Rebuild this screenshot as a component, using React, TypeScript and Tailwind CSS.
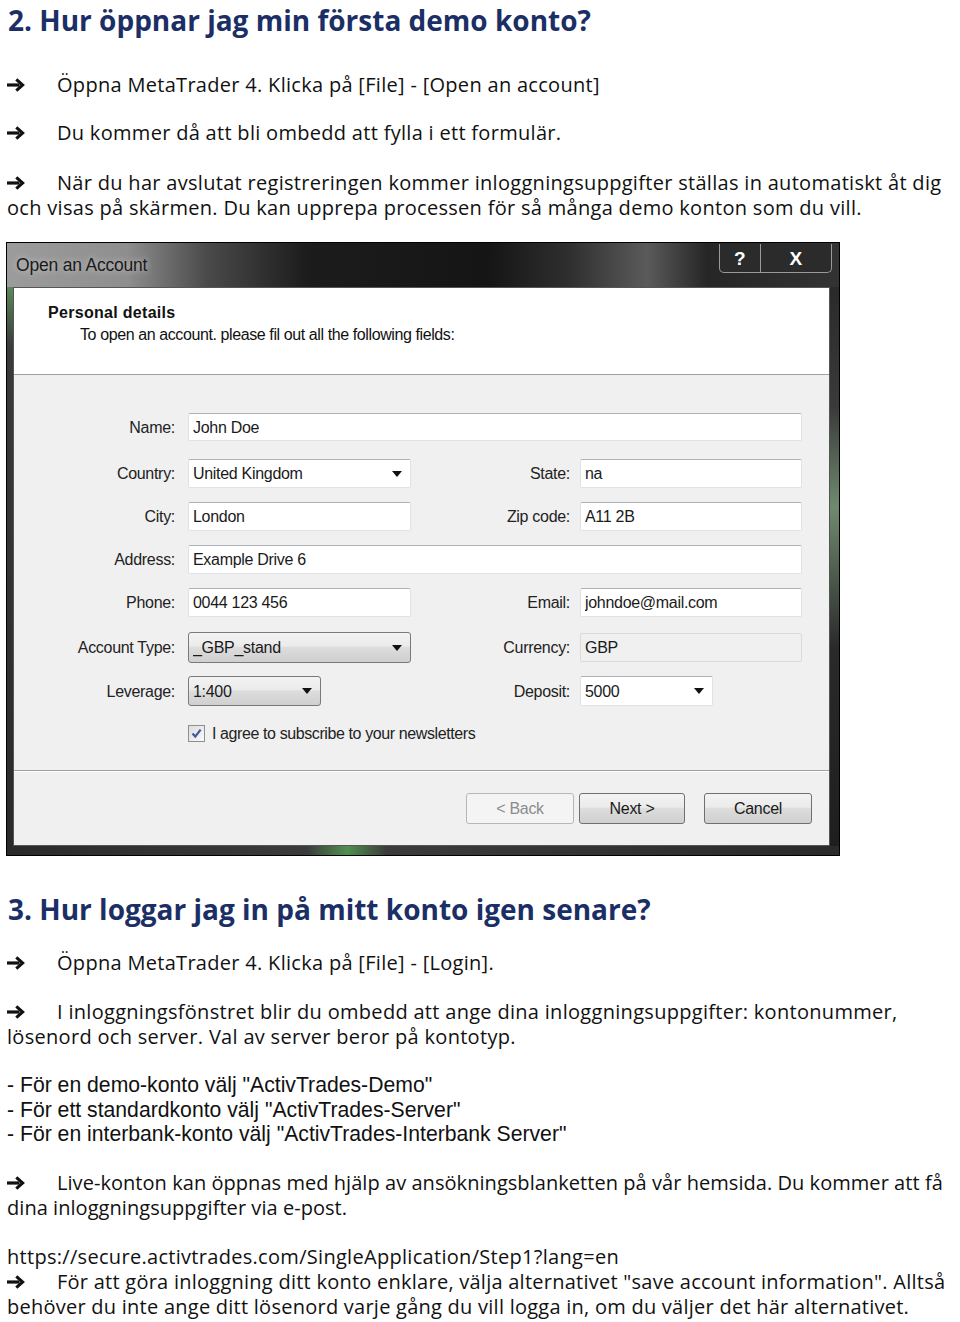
import React from "react"

const dlgFont = "font-['Liberation_Sans',Arial,sans-serif]"

function Arrow() {
  return (
    <span className="inline-block h-[14px] w-[50px] align-baseline leading-none">
      <svg width="19" height="14" viewBox="0 0 19 14" className="block">
        <path d="M0 5.4h12.5v3.2H0z" fill="#111" />
        <path d="M9.3 1.4 15.6 7l-6.3 5.6" fill="none" stroke="#111" strokeWidth="3.1" />
      </svg>
    </span>
  )
}

function Caret() {
  return (
    <svg width="10" height="6" viewBox="0 0 10 6" className="shrink-0">
      <path d="M0 0h10L5 6z" fill="#111" />
    </svg>
  )
}

type Kind = "text" | "combo" | "button" | "disabled"

function Field({ value, w, kind = "text", h = "h-[29px]" }: { value: string; w: string; kind?: Kind; h?: string }) {
  const skin =
    kind === "button"
      ? "rounded-[3px] border border-[#7a7a7a] bg-[linear-gradient(#f3f3f3,#ebebeb_45%,#dddddd_50%,#cfcfcf)]"
      : kind === "disabled"
        ? "rounded-[2px] border border-[#dadada] bg-[#f0f0f0]"
        : "rounded-[2px] border border-[#dfe2e7] border-t-[#aeb1b7] bg-white"
  return (
    <div className={`${w} ${h} ${skin} flex items-center pl-[4px] pr-[8px] text-[16px] tracking-[-0.3px] text-[#1a1a1a]`}>
      <span className="flex-1 truncate">{value}</span>
      {(kind === "combo" || kind === "button") && <Caret />}
    </div>
  )
}

function Label({ children, w = "w-[161px]", gap = "mr-[13px]" }: { children: React.ReactNode; w?: string; gap?: string }) {
  return <div className={`${w} ${gap} shrink-0 text-right text-[16px] tracking-[-0.3px] text-[#222]`}>{children}</div>
}

function Btn({ children, disabled }: { children: React.ReactNode; disabled?: boolean }) {
  return (
    <div
      className={`flex h-[31px] items-center justify-center rounded-[3px] border text-[16px] tracking-[-0.3px] ${
        disabled
          ? "border-[#b5b8bb] bg-[#f4f4f4] text-[#8c8c8c]"
          : "border-[#707070] bg-[linear-gradient(#f3f3f3,#ebebeb_45%,#dddddd_50%,#cfcfcf)] text-[#1a1a1a]"
      }`}
    >
      {children}
    </div>
  )
}

function Dialog() {
  return (
    <div className={`${dlgFont} ml-[-1px] mt-[22px] flex h-[614px] w-[834px] flex-col border border-black bg-[#262626]`}>
      <div className="flex h-[44px] shrink-0 bg-[linear-gradient(90deg,#9c9c9c_0px,#8e8e8e_120px,#4a4a4a_200px,#1c1c1c_300px,#151515_480px,#2e2e2e_560px,#5a5a5a_640px,#262626_700px,#333_834px)]">
        <div className="pl-[9px] pt-[12px] text-[17.5px] leading-[20px] tracking-[-0.2px] text-[#1a1a1a] [text-shadow:0_0_6px_#d0d0d0]">
          Open an Account
        </div>
        <div className="ml-auto mr-[7px] mt-[1px] flex h-[29px]">
          <div className="flex w-[42px] items-center justify-center rounded-bl-[5px] border border-t-0 border-[#9a9a9a] bg-[#2b2b2b] text-[19px] font-bold text-white">
            ?
          </div>
          <div className="flex w-[71px] items-center justify-center rounded-br-[5px] border border-l-0 border-t-0 border-[#9a9a9a] bg-[#2b2b2b] text-[19px] font-bold text-white">
            X
          </div>
        </div>
      </div>
      <div className="flex flex-1">
        <div className="w-[6px] shrink-0 bg-[linear-gradient(#5a8a5a,#3a3a3a_60px,#2a2a2a)]" />
        <div className="flex w-[817px] flex-col border border-[#555] bg-[#f0f0f0]">
          <div className="h-[87px] shrink-0 border-b border-[#a0a0a0] bg-white pl-[34px] pt-[14px] leading-[22px] text-[#111]">
            <div className="text-[16px] font-bold">Personal details</div>
            <div className="pl-[32px] text-[16px] tracking-[-0.4px]">To open an account. please fil out all the following fields:</div>
          </div>
          <div className="h-[396px] shrink-0 border-b border-[#a0a0a0]">
            <div className="mt-[38px] flex h-[28px] items-center">
              <Label>Name:</Label>
              <Field value="John Doe" w="w-[614px]" h="h-[28px]" />
            </div>
            <div className="mt-[18px] flex items-center">
              <Label>Country:</Label>
              <Field value="United Kingdom" w="w-[223px]" kind="combo" />
              <Label w="w-[159px]" gap="mr-[10px]">State:</Label>
              <Field value="na" w="w-[222px]" />
            </div>
            <div className="mt-[14px] flex items-center">
              <Label>City:</Label>
              <Field value="London" w="w-[223px]" />
              <Label w="w-[159px]" gap="mr-[10px]">Zip code:</Label>
              <Field value="A11 2B" w="w-[222px]" />
            </div>
            <div className="mt-[14px] flex items-center">
              <Label>Address:</Label>
              <Field value="Example Drive 6" w="w-[614px]" />
            </div>
            <div className="mt-[14px] flex items-center">
              <Label>Phone:</Label>
              <Field value="0044 123 456" w="w-[223px]" />
              <Label w="w-[159px]" gap="mr-[10px]">Email:</Label>
              <Field value="johndoe@mail.com" w="w-[222px]" />
            </div>
            <div className="mt-[15px] flex items-center">
              <Label>Account Type:</Label>
              <Field value="_GBP_stand" w="w-[223px]" kind="button" h="h-[31px]" />
              <Label w="w-[159px]" gap="mr-[10px]">Currency:</Label>
              <Field value="GBP" w="w-[222px]" kind="disabled" />
            </div>
            <div className="mt-[13px] flex items-center">
              <Label>Leverage:</Label>
              <Field value="1:400" w="w-[133px]" kind="button" h="h-[30px]" />
              <Label w="w-[249px]" gap="mr-[10px]">Deposit:</Label>
              <Field value="5000" w="w-[133px]" kind="combo" h="h-[30px]" />
            </div>
            <div className="mt-[19px] flex h-[17px] items-center pl-[174px]">
              <div className="mr-[7px] flex h-[17px] w-[17px] items-center justify-center border border-[#8e8f8f] bg-[linear-gradient(135deg,#dcdcdc,#fafafa)]">
                <svg width="11" height="11" viewBox="0 0 11 11">
                  <path d="M1.5 5.5 4.3 8.6 9.6 1.6" fill="none" stroke="#3d5a9a" strokeWidth="2.2" />
                </svg>
              </div>
              <span className="text-[16px] tracking-[-0.4px] text-[#222]">I agree to subscribe to your newsletters</span>
            </div>
          </div>
          <div className="flex flex-1 items-start justify-end border-t border-white pr-[17px] pt-[21px]">
            <div className="w-[108px]">
              <Btn disabled>&lt; Back</Btn>
            </div>
            <div className="ml-[5px] w-[106px]">
              <Btn>Next &gt;</Btn>
            </div>
            <div className="ml-[19px] w-[108px]">
              <Btn>Cancel</Btn>
            </div>
          </div>
        </div>
        <div className="w-[9px] shrink-0 bg-[linear-gradient(#2a2a2a,#3a3a3a_120px,#6f8a6f_220px,#2a2a2a_360px,#1e1e1e)]" />
      </div>
      <div className="h-[9px] shrink-0 bg-[linear-gradient(90deg,#2a2a2a,#3b3b3b_300px,#4f8f4f_340px,#3b3b3b_380px,#2a2a2a)]" />
    </div>
  )
}

export default function App() {
  return (
    <div className="min-h-[1322px] w-[960px] bg-white pl-[7px] font-['Open_Sans',sans-serif] text-[20px] leading-[25px] tracking-[0.3px] text-[#111]">
      <h2 className="pl-[1px] text-[28px] font-bold leading-[40px] tracking-normal text-[#1b2f66]">2. Hur öppnar jag min första demo konto?</h2>
      <p className="mt-[32px]">
        <Arrow />
        Öppna MetaTrader 4. Klicka på [File] - [Open an account]
      </p>
      <p className="mt-[23px]">
        <Arrow />
        Du kommer då att bli ombedd att fylla i ett formulär.
      </p>
      <p className="mt-[25px]">
        <Arrow />
        När du har avslutat registreringen kommer inloggningsuppgifter ställas in automatiskt åt dig
        <br />
        och visas på skärmen. Du kan upprepa processen för så många demo konton som du vill.
      </p>
      <Dialog />
      <h2 className="mt-[33px] pl-[1px] text-[28px] font-bold leading-[40px] tracking-normal text-[#1b2f66]">
        3. Hur loggar jag in på mitt konto igen senare?
      </h2>
      <p className="mt-[21px]">
        <Arrow />
        Öppna MetaTrader 4. Klicka på [File] - [Login].
      </p>
      <p className="mt-[24px]">
        <Arrow />I inloggningsfönstret blir du ombedd att ange dina inloggningsuppgifter: kontonummer,
        <br />
        lösenord och server. Val av server beror på kontotyp.
      </p>
      <div className="mt-[24px] font-['Liberation_Sans',Arial,sans-serif] text-[21.2px] leading-[24.5px] tracking-normal">
        <div>- För en demo-konto välj "ActivTrades-Demo"</div>
        <div>- För ett standardkonto välj "ActivTrades-Server"</div>
        <div>- För en interbank-konto välj "ActivTrades-Interbank Server"</div>
      </div>
      <p className="mt-[23px] tracking-[0.05px]">
        <Arrow />
        Live-konton kan öppnas med hjälp av ansökningsblanketten på vår hemsida. Du kommer att få
        <br />
        dina inloggningsuppgifter via e-post.
      </p>
      <p className="mt-[24px]">https://secure.activtrades.com/SingleApplication/Step1?lang=en</p>
      <p className="tracking-[0.25px]">
        <Arrow />
        För att göra inloggning ditt konto enklare, välja alternativet "save account information". Alltså
        <br />
        behöver du inte ange ditt lösenord varje gång du vill logga in, om du väljer det här alternativet.
      </p>
    </div>
  )
}
